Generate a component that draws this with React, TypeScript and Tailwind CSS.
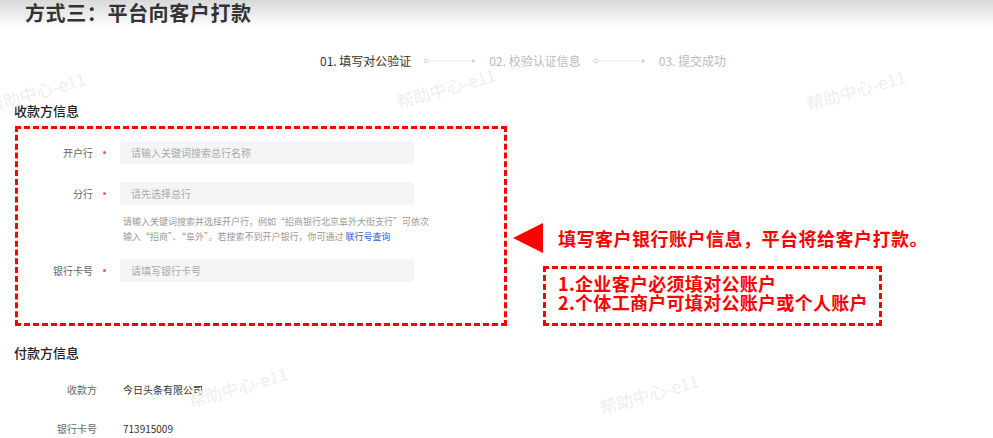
import React from "react";

function Watermark({ className }: { className: string }) {
  return (
    <span
      className={`pointer-events-none absolute -rotate-[16deg] whitespace-nowrap text-[17px] leading-[22px] text-[#eeeeee] select-none ${className}`}
    >
      帮助中心-e11
    </span>
  );
}

function StepArrow() {
  return (
    <svg width="54" height="8" viewBox="0 0 54 8" className="shrink-0">
      <circle cx="3" cy="4" r="2" fill="none" stroke="#d4d4d4" strokeWidth="1" />
      <line x1="6" y1="4" x2="50" y2="4" stroke="#d4d4d4" strokeWidth="1" strokeDasharray="1 1" />
      <path d="M49 2 L53 4 L49 6 Z" fill="#d4d4d4" />
    </svg>
  );
}

function FormRow({ label, placeholder }: { label: string; placeholder: string }) {
  return (
    <div className="flex items-center">
      <span className="w-[75px] text-right text-[10px] text-[#666]">{label}</span>
      <span className="ml-[10px] h-[3px] w-[3px] rounded-full bg-[#f55]" />
      <div className="ml-[14px] flex h-[23px] w-[294px] items-center rounded-[3px] bg-[#f5f5f5] pl-[11px] text-[10px] text-[#aaa]">
        {placeholder}
      </div>
    </div>
  );
}

export default function App() {
  return (
    <div className="relative h-[438px] w-[993px] overflow-hidden bg-white font-['Noto_Sans_CJK_SC',sans-serif]">
      <div className="h-[28px] bg-linear-to-b from-[#d9d9d9] to-white pl-[25px]">
        <h1 className="text-[20px] leading-[26px] font-bold tracking-[0.6px] text-[#333]">方式三：平台向客户打款</h1>
      </div>

      {/* steps */}
      <div className="mt-[23px] flex h-[20px] items-center pl-[320px] text-[12px]">
        <span className="text-[#333]">01. 填写对公验证</span>
        <span className="ml-[12px]">
          <StepArrow />
        </span>
        <span className="ml-[12px] text-[#bbb]">02. 校验认证信息</span>
        <span className="ml-[12px]">
          <StepArrow />
        </span>
        <span className="ml-[12px] text-[#bbb]">03. 提交成功</span>
      </div>

      <h2 className="mt-[30px] pl-[14px] text-[13px] leading-[20px] font-medium text-[#222]">收款方信息</h2>

      <div className="mt-[5px] flex">
        <div className="ml-[15px] w-[492px] border-[3px] border-dashed border-[#f00] pt-[12px] pb-[41px]">
          <FormRow label="开户行" placeholder="请输入关键词搜索总行名称" />
          <div className="mt-[18px]">
            <FormRow label="分行" placeholder="请先选择总行" />
          </div>
          <p className="mt-[9px] ml-[105px] w-[312px] text-[9px] leading-[15px] text-[#999]">
            请输入关键词搜索并选择开户行，例如“招商银行北京阜外大街支行”可依次输入“招商”、“阜外”。若搜索不到开户银行，你可通过{" "}
            <span className="text-[#2b5bd7]">联行号查询</span>
          </p>
          <div className="mt-[15px]">
            <FormRow label="银行卡号" placeholder="请填写银行卡号" />
          </div>
        </div>

        <div className="ml-[6px] mt-[97px]">
          <div className="flex h-[30px] items-center">
            <svg width="30" height="30" viewBox="0 0 30 30" className="shrink-0">
              <polygon points="0,15 30,0 30,30" fill="#f00" />
            </svg>
            <span className="ml-[15px] text-[18px] leading-[22px] font-bold tracking-[0.5px] whitespace-nowrap text-[#f00]">
              填写客户银行账户信息，平台将给客户打款。
            </span>
          </div>
          <div className="mt-[13px] ml-[30px] h-[60px] w-[339px] border-[3px] border-dashed border-[#f00] pt-[5px] pl-[12px] text-[18px] leading-[19px] font-bold tracking-[0.3px] text-[#f00]">
            <p>1.企业客户必须填对公账户</p>
            <p>2.个体工商户可填对公账户或个人账户</p>
          </div>
        </div>
      </div>

      <h2 className="mt-[17px] pl-[14px] text-[13px] leading-[20px] font-medium text-[#222]">付款方信息</h2>
      <div className="mt-[16px] flex h-[20px] items-center text-[10px]">
        <span className="w-[97px] text-right text-[#666]">收款方</span>
        <span className="ml-[26px] text-[#333]">今日头条有限公司</span>
      </div>
      <div className="mt-[19px] flex h-[20px] items-center text-[10px]">
        <span className="w-[97px] text-right text-[#666]">银行卡号</span>
        <span className="ml-[26px] text-[#333]">713915009</span>
      </div>

      <Watermark className="left-[-15px] top-[81px]" />
      <Watermark className="left-[395px] top-[77px]" />
      <Watermark className="left-[805px] top-[79px]" />
      <Watermark className="left-[187px] top-[376px]" />
      <Watermark className="left-[598px] top-[383px]" />
    </div>
  );
}
